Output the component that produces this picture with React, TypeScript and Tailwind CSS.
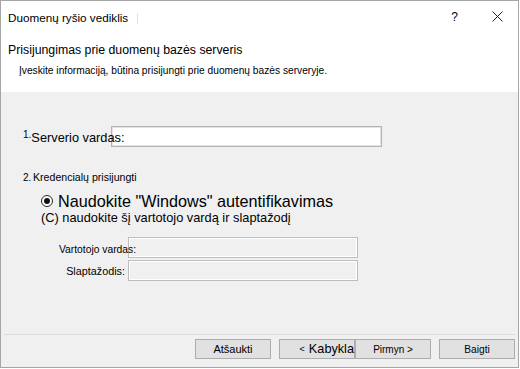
import React from "react";

const font = { fontFamily: '"Liberation Sans", Arial, sans-serif' };

function Radio() {
  return (
    <svg width="12" height="12" viewBox="0 0 12 12" className="shrink-0">
      <circle cx="6" cy="6" r="5.5" fill="#ffffff" stroke="#262626" strokeWidth="1" />
      <circle cx="6" cy="6" r="3" fill="#111111" />
    </svg>
  );
}

export default function App() {
  return (
    <div className="w-[520px] h-[369px] bg-white" style={font}>
      <div className="w-[519px] h-[368px] border border-[#a6a6a6] bg-[#f0f0f0] flex flex-col text-black">
        {/* Header */}
        <div className="h-[91px] bg-white flex flex-col">
          <div className="flex items-start">
            <div className="pl-[7px] pt-[9px] text-[11.7px] leading-[16px] flex items-center">
              <span>Duomenų ryšio vediklis</span>
              <span className="inline-block w-px h-[11px] bg-[#c4eef6] ml-[9px]" />
            </div>
            <div className="flex-1" />
            <div className="pt-[8px] text-[12px] leading-[16px] mr-[34px]">?</div>
            <div className="pt-[10px] mr-[15px]">
              <svg width="11" height="11" viewBox="0 0 11 11">
                <path d="M0.5 0.5 L10.5 10.5 M10.5 0.5 L0.5 10.5" stroke="#222" strokeWidth="1" fill="none" />
              </svg>
            </div>
          </div>
          <div className="pl-[7px] mt-[16px] text-[12.3px] leading-[16px]">
            Prisijungimas prie duomenų bazės serveris
          </div>
          <div className="pl-[18px] mt-[6px] text-[10.2px] leading-[14px] whitespace-nowrap">
            Įveskite informaciją, būtina prisijungti prie duomenų bazės serveryje.
          </div>
        </div>

        {/* Body */}
        <div className="flex-1 flex flex-col pt-[34px]">
          <div className="flex items-center h-[21px] pl-[22px]">
            <div className="w-[88px] shrink-0 flex items-baseline relative z-10 whitespace-nowrap">
              <span className="text-[10px] w-[12px] relative -top-[3px]">1.</span>
              <span className="text-[12.8px] leading-[16px] relative top-[1px]">Serverio vardas:</span>
            </div>
            <div className="w-[271px] h-[21px] bg-white border border-[#b4b4b4] shadow-[inset_0_0_0_1px_#e3e3e3]" />
          </div>

          <div className="flex items-baseline mt-[24px] pl-[22px] leading-[13px] whitespace-nowrap">
            <span className="text-[10px] w-[10px]">2.</span>
            <span className="text-[10.6px]">Kredencialų prisijungti</span>
          </div>

          <div className="flex items-center gap-[5px] pl-[40px] h-[18px] mt-[8px]">
            <Radio />
            <span className="text-[16.2px] leading-[18px] whitespace-nowrap">
              Naudokite "Windows" autentifikavimas
            </span>
          </div>

          <div className="pl-[40px] text-[12.8px] leading-[15px] whitespace-nowrap">
            (C) naudokite šį vartotojo vardą ir slaptažodį
          </div>

          <div className="flex items-center h-[21px] mt-[12px] pl-[58px]">
            <div className="w-[69px] shrink-0 relative z-10 whitespace-nowrap text-[10.3px] leading-[13px] pt-[4px]">
              Vartotojo vardas:
            </div>
            <div className="w-[230px] h-[21px] bg-[#f0f0f0] border border-[#bdbdbd] shadow-[inset_0_0_0_1px_#ffffff]" />
          </div>

          <div className="flex items-center h-[21px] mt-[2px] pl-[58px]">
            <div className="w-[69px] shrink-0 text-right pr-[3px] whitespace-nowrap text-[10.8px] leading-[13px] pt-[1px]">
              Slaptažodis:
            </div>
            <div className="w-[230px] h-[21px] bg-[#f0f0f0] border border-[#bdbdbd] shadow-[inset_0_0_0_1px_#ffffff]" />
          </div>
        </div>

        {/* Footer */}
        <div className="h-[33px] flex flex-col">
          <div className="mx-[3px] h-px bg-[#dcdcdc]" />
          <div className="flex justify-end pr-[3px] pt-[4px]">
            <div className="w-[76px] h-[20px] mr-[8px] bg-[#e1e1e1] border border-[#adadad] flex items-center justify-center text-[11px] leading-[13px]">
              Atšaukti
            </div>
            <div className="w-[76px] h-[20px] bg-[#e1e1e1] border border-[#adadad] flex items-center justify-end whitespace-nowrap leading-[16px]">
              <span className="text-[9px] mr-[4px]">&lt;</span>
              <span className="text-[12.7px]">Kabykla</span>
            </div>
            <div className="w-[76px] h-[20px] mr-[8px] bg-[#e1e1e1] border border-[#adadad] flex items-center justify-center text-[10px] leading-[13px] whitespace-nowrap">
              Pirmyn &gt;
            </div>
            <div className="w-[76px] h-[20px] bg-[#e1e1e1] border border-[#adadad] flex items-center justify-center text-[10.2px] leading-[13px]">
              Baigti
            </div>
          </div>
        </div>
      </div>
    </div>
  );
}
